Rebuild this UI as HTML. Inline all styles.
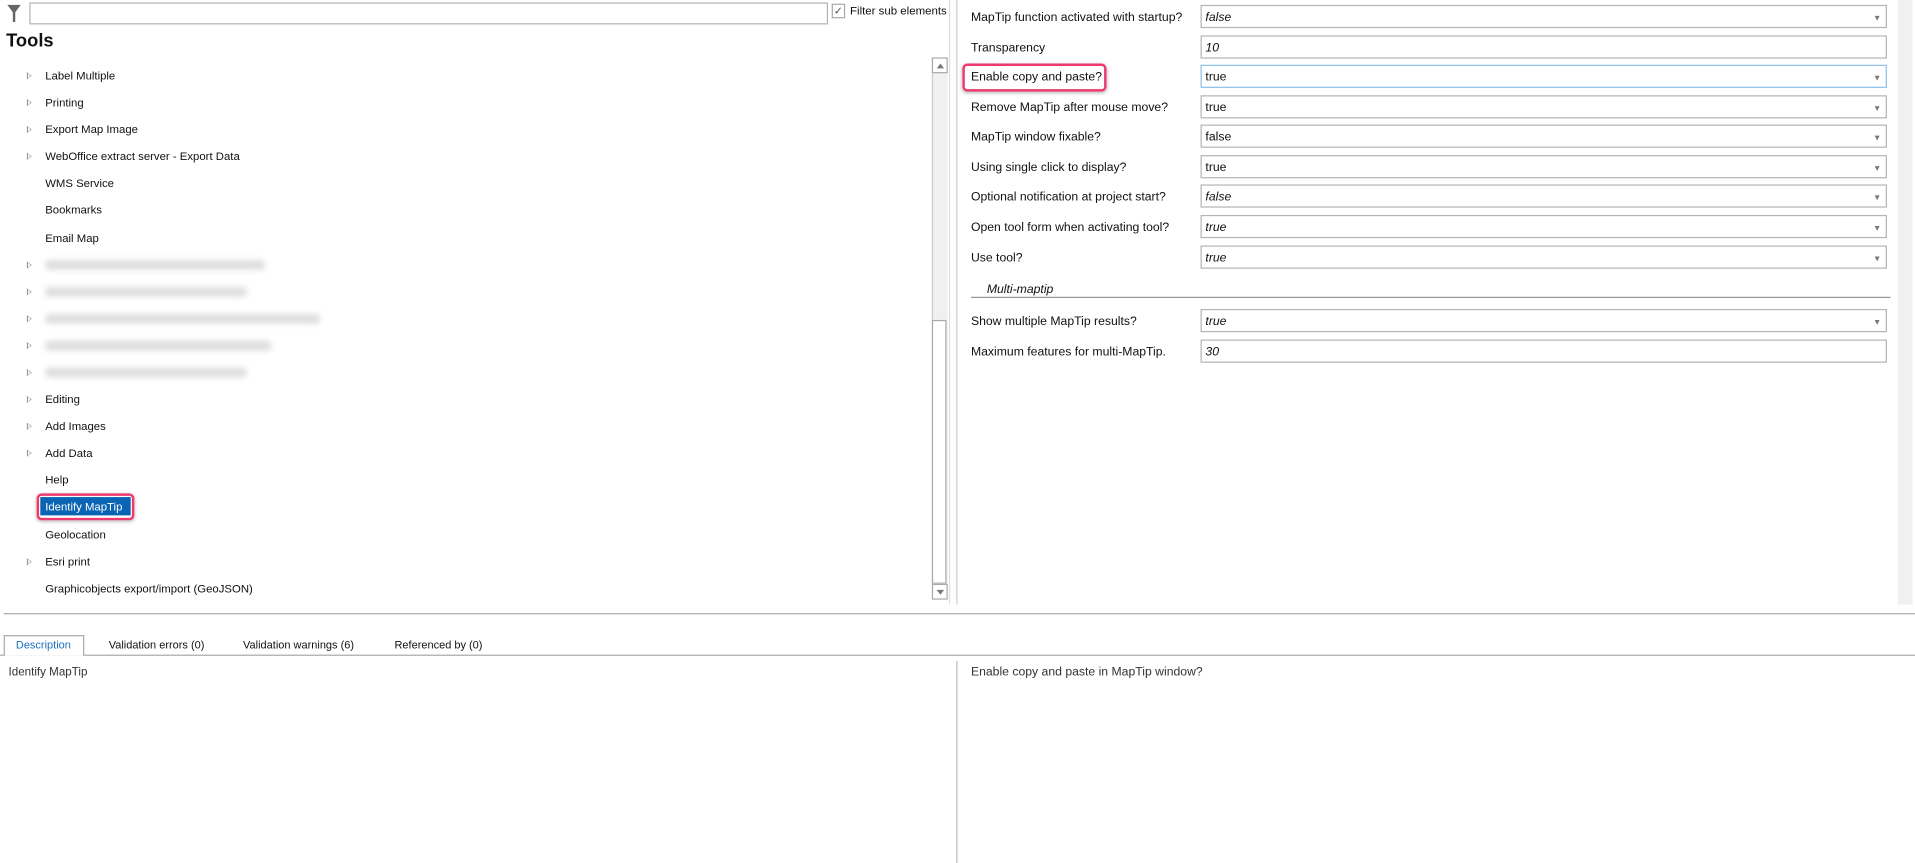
<!DOCTYPE html>
<html><head><meta charset="utf-8"><style>
html,body{margin:0;padding:0;background:#fff;overflow:hidden;width:1915px;height:862px}
#w{position:absolute;left:0;top:0;width:1568px;height:706px;transform:scale(1.22131);transform-origin:0 0;font-family:"Liberation Sans",sans-serif;font-size:10px;color:#111}
.a{position:absolute}
.t{position:absolute;left:37px;white-space:nowrap;line-height:12px;font-size:9.3px;margin-top:1px}
.tri{position:absolute;left:22px;width:0;height:0;border-left:4px solid #999;border-top:3.5px solid transparent;border-bottom:3.5px solid transparent;margin-top:1px}
.tri:after{content:"";position:absolute;left:-3.5px;top:-2.2px;border-left:2.6px solid #fff;border-top:2.2px solid transparent;border-bottom:2.2px solid transparent}
.lbl{position:absolute;left:795px;white-space:nowrap;line-height:12px;margin-top:2px}
.f{position:absolute;left:983px;width:562px;border:1px solid #b5b5b5;line-height:19px;padding-left:3px;box-sizing:border-box;height:19px}
.f i{font-style:italic}
.dd:after{content:"";position:absolute;right:5px;top:8px;border-top:4px solid #777;border-left:2.5px solid transparent;border-right:2.5px solid transparent}
.blur{position:absolute;left:37px;height:8px;background:#dedede;filter:blur(2.5px);border-radius:3px;margin-top:1px}
</style></head><body><div id="w">
<svg class="a" style="left:5px;top:3px" width="13" height="16" viewBox="0 0 13 16"><path d="M1 1h11L7.5 7v8H5.5V7z" fill="#666"/></svg>
<div class="a" style="left:24px;top:2px;width:654px;height:18px;border:1px solid #b3b3b3;box-sizing:border-box"></div>
<div class="a" style="left:681px;top:3px;width:9px;height:10px;border:1px solid #aaa;font-size:9px;line-height:10px;color:#555;text-align:center">✓</div>
<div class="a" style="left:696px;top:3px;font-size:9.4px;white-space:nowrap">Filter sub elements</div>
<div class="a" style="left:5px;top:25px;font-size:15px;font-weight:bold">Tools</div>
<div class="a" style="left:763px;top:47px;width:12px;height:444px;background:#f0f0f0;border-left:1px solid #ccc"></div>
<div class="a" style="left:763px;top:262px;width:12px;height:216px;background:#fff;border:1px solid #aaa;box-sizing:border-box"></div>
<div class="a" style="left:763px;top:47px;width:13px;height:13px;border:1px solid #aaa;background:#fff;box-sizing:border-box"><div class="a" style="left:3px;top:4px;border-bottom:4px solid #777;border-left:3px solid transparent;border-right:3px solid transparent"></div></div>
<div class="a" style="left:763px;top:478px;width:13px;height:13px;border:1px solid #aaa;background:#fff;box-sizing:border-box"><div class="a" style="left:3px;top:4px;border-top:4px solid #777;border-left:3px solid transparent;border-right:3px solid transparent"></div></div>
<div class="a" style="left:777px;top:0;width:1px;height:495px;background:#ddd"></div>
<div class="a" style="left:783px;top:0;width:1px;height:495px;background:#ccc"></div>
<div class="tri" style="top:58px"></div><div class="t" style="top:55px">Label Multiple</div>
<div class="tri" style="top:80px"></div><div class="t" style="top:77px">Printing</div>
<div class="tri" style="top:102px"></div><div class="t" style="top:99px">Export Map Image</div>
<div class="tri" style="top:124px"></div><div class="t" style="top:121px">WebOffice extract server - Export Data</div>
<div class="t" style="top:143px">WMS Service</div>
<div class="t" style="top:165px">Bookmarks</div>
<div class="t" style="top:188px">Email Map</div>
<div class="tri" style="top:213px"></div><div class="blur" style="top:212px;width:180px"></div>
<div class="tri" style="top:235px"></div><div class="blur" style="top:234px;width:165px"></div>
<div class="tri" style="top:257px"></div><div class="blur" style="top:256px;width:225px"></div>
<div class="tri" style="top:279px"></div><div class="blur" style="top:278px;width:185px"></div>
<div class="tri" style="top:301px"></div><div class="blur" style="top:300px;width:165px"></div>
<div class="tri" style="top:323px"></div><div class="t" style="top:320px">Editing</div>
<div class="tri" style="top:345px"></div><div class="t" style="top:342px">Add Images</div>
<div class="tri" style="top:367px"></div><div class="t" style="top:364px">Add Data</div>
<div class="t" style="top:386px">Help</div>
<div class="a" style="left:30px;top:404px;width:80px;height:22px;border:2.5px solid #ee3a6f;border-radius:4px;box-sizing:border-box;box-shadow:0 1px 3px rgba(0,0,0,.3)"></div>
<div class="a" style="left:33px;top:407px;width:74px;height:15px;background:#0a64b4"></div>
<div class="t" style="top:408px;color:#fff">Identify MapTip</div>
<div class="t" style="top:431px">Geolocation</div>
<div class="tri" style="top:456px"></div><div class="t" style="top:453px">Esri print</div>
<div class="t" style="top:475px">Graphicobjects export/import (GeoJSON)</div>
<div class="a" style="left:1554px;top:0;width:12px;height:495px;background:#f0f0f0"></div>
<div class="lbl" style="top:7px">MapTip function activated with startup?</div><div class="f dd" style="top:4px"><i>false</i></div>
<div class="lbl" style="top:32px">Transparency</div><div class="f" style="top:29px"><i>10</i></div>
<div class="a" style="left:788px;top:52px;width:118px;height:23px;border:2.5px solid #ee3a6f;border-radius:4px;box-sizing:border-box;box-shadow:0 1px 3px rgba(0,0,0,.3)"></div>
<div class="lbl" style="top:56px">Enable copy and paste?</div><div class="f dd" style="top:53px;border-color:#8ec0e8">true</div>
<div class="lbl" style="top:81px">Remove MapTip after mouse move?</div><div class="f dd" style="top:78px">true</div>
<div class="lbl" style="top:105px">MapTip window fixable?</div><div class="f dd" style="top:102px">false</div>
<div class="lbl" style="top:130px">Using single click to display?</div><div class="f dd" style="top:127px">true</div>
<div class="lbl" style="top:154px">Optional notification at project start?</div><div class="f dd" style="top:151px"><i>false</i></div>
<div class="lbl" style="top:179px">Open tool form when activating tool?</div><div class="f dd" style="top:176px"><i>true</i></div>
<div class="lbl" style="top:204px">Use tool?</div><div class="f dd" style="top:201px"><i>true</i></div>
<div class="a" style="left:808px;top:232px;font-style:italic;white-space:nowrap">Multi-maptip</div>
<div class="a" style="left:795px;top:243px;width:753px;height:1px;background:#999"></div>
<div class="lbl" style="top:256px">Show multiple MapTip results?</div><div class="f dd" style="top:253px"><i>true</i></div>
<div class="lbl" style="top:281px">Maximum features for multi-MapTip.</div><div class="f" style="top:278px"><i>30</i></div>
<div class="a" style="left:3px;top:502px;width:1565px;height:1px;background:#aaa"></div>
<div class="a" style="left:0;top:536px;width:1568px;height:1px;background:#aaa"></div>
<div class="a" style="left:3px;top:520px;width:66px;height:17px;border:1px solid #aaa;border-bottom:none;background:#fff;box-sizing:border-box"></div>
<div class="a" style="left:13px;top:523px;color:#1a6fc0;font-size:9px">Description</div>
<div class="a" style="left:89px;top:523px;font-size:9px;white-space:nowrap">Validation errors (0)</div>
<div class="a" style="left:199px;top:523px;font-size:9px;white-space:nowrap">Validation warnings (6)</div>
<div class="a" style="left:323px;top:523px;font-size:9px;white-space:nowrap">Referenced by (0)</div>
<div class="a" style="left:7px;top:545px;color:#333;font-size:9.5px">Identify MapTip</div>
<div class="a" style="left:783px;top:541px;width:1px;height:166px;background:#bbb"></div>
<div class="a" style="left:795px;top:545px;color:#333;white-space:nowrap">Enable copy and paste in MapTip window?</div>
</div></body></html>
